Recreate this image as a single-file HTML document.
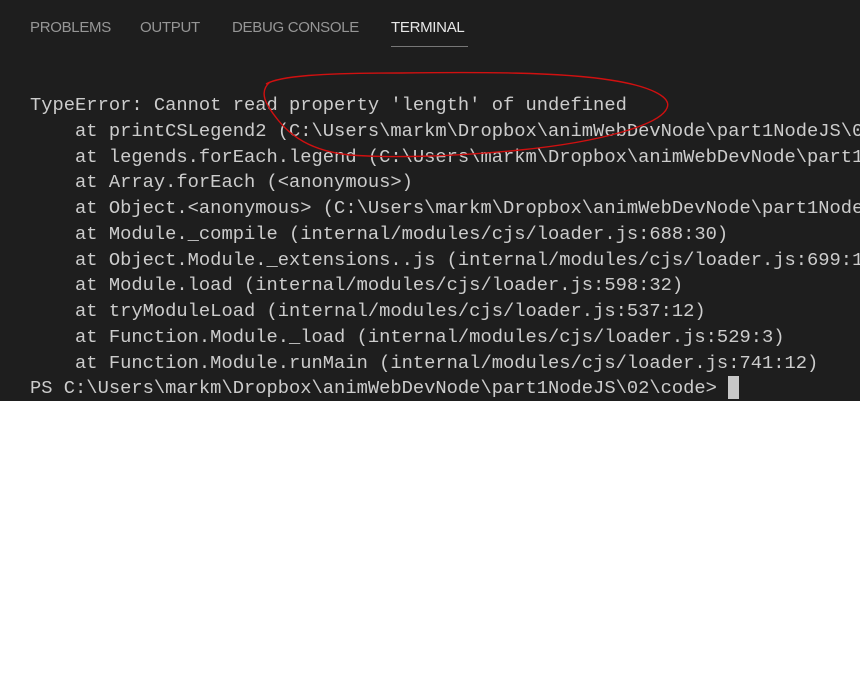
<!DOCTYPE html>
<html><head><meta charset="utf-8"><style>
html,body{margin:0;padding:0;background:#fff;width:860px;height:675px;overflow:hidden}
#panel{position:absolute;left:0;top:0;width:860px;height:401px;background:#1e1e1e;overflow:hidden}
.tab{position:absolute;top:19px;font-family:"Liberation Sans",sans-serif;font-size:15px;color:#969696;letter-spacing:-0.3px}
.act{color:#e7e7e7}
#ul{position:absolute;left:391px;top:46px;width:77px;height:1px;background:#777}
pre{position:absolute;left:30px;top:93px;margin:0;font-family:"Liberation Mono",monospace;font-size:18.77px;line-height:25.75px;color:#cccccc;white-space:pre}
#cur{position:absolute;left:728px;top:376px;width:11px;height:23px;background:#c8c8c8}
svg{position:absolute;left:0;top:0}
</style></head><body>
<div id="panel">
<div class="tab" style="left:30px">PROBLEMS</div>
<div class="tab" style="left:140px">OUTPUT</div>
<div class="tab" style="left:232px">DEBUG CONSOLE</div>
<div class="tab act" style="left:391px">TERMINAL</div>
<div id="ul"></div>
<pre>TypeError: Cannot read property 'length' of undefined
    at printCSLegend2 (C:\Users\markm\Dropbox\animWebDevNode\part1NodeJS\02
    at legends.forEach.legend (C:\Users\markm\Dropbox\animWebDevNode\part1N
    at Array.forEach (&lt;anonymous&gt;)
    at Object.&lt;anonymous&gt; (C:\Users\markm\Dropbox\animWebDevNode\part1NodeJS
    at Module._compile (internal/modules/cjs/loader.js:688:30)
    at Object.Module._extensions..js (internal/modules/cjs/loader.js:699:1
    at Module.load (internal/modules/cjs/loader.js:598:32)
    at tryModuleLoad (internal/modules/cjs/loader.js:537:12)
    at Function.Module._load (internal/modules/cjs/loader.js:529:3)
    at Function.Module.runMain (internal/modules/cjs/loader.js:741:12)
PS C:\Users\markm\Dropbox\animWebDevNode\part1NodeJS\02\code&gt; </pre>
<div id="cur"></div>
<svg width="860" height="401"><path d="M266 84 C280 76 320 73 400 73 C480 72 560 72 610 80 C650 86 672 97 667 108 C660 125 600 142 520 150 C450 157 390 158 350 155 C310 151 290 135 278 120 C266 105 258 92 270 82" fill="none" stroke="#d01010" stroke-width="1.4"/></svg>
</div>
</body></html>
